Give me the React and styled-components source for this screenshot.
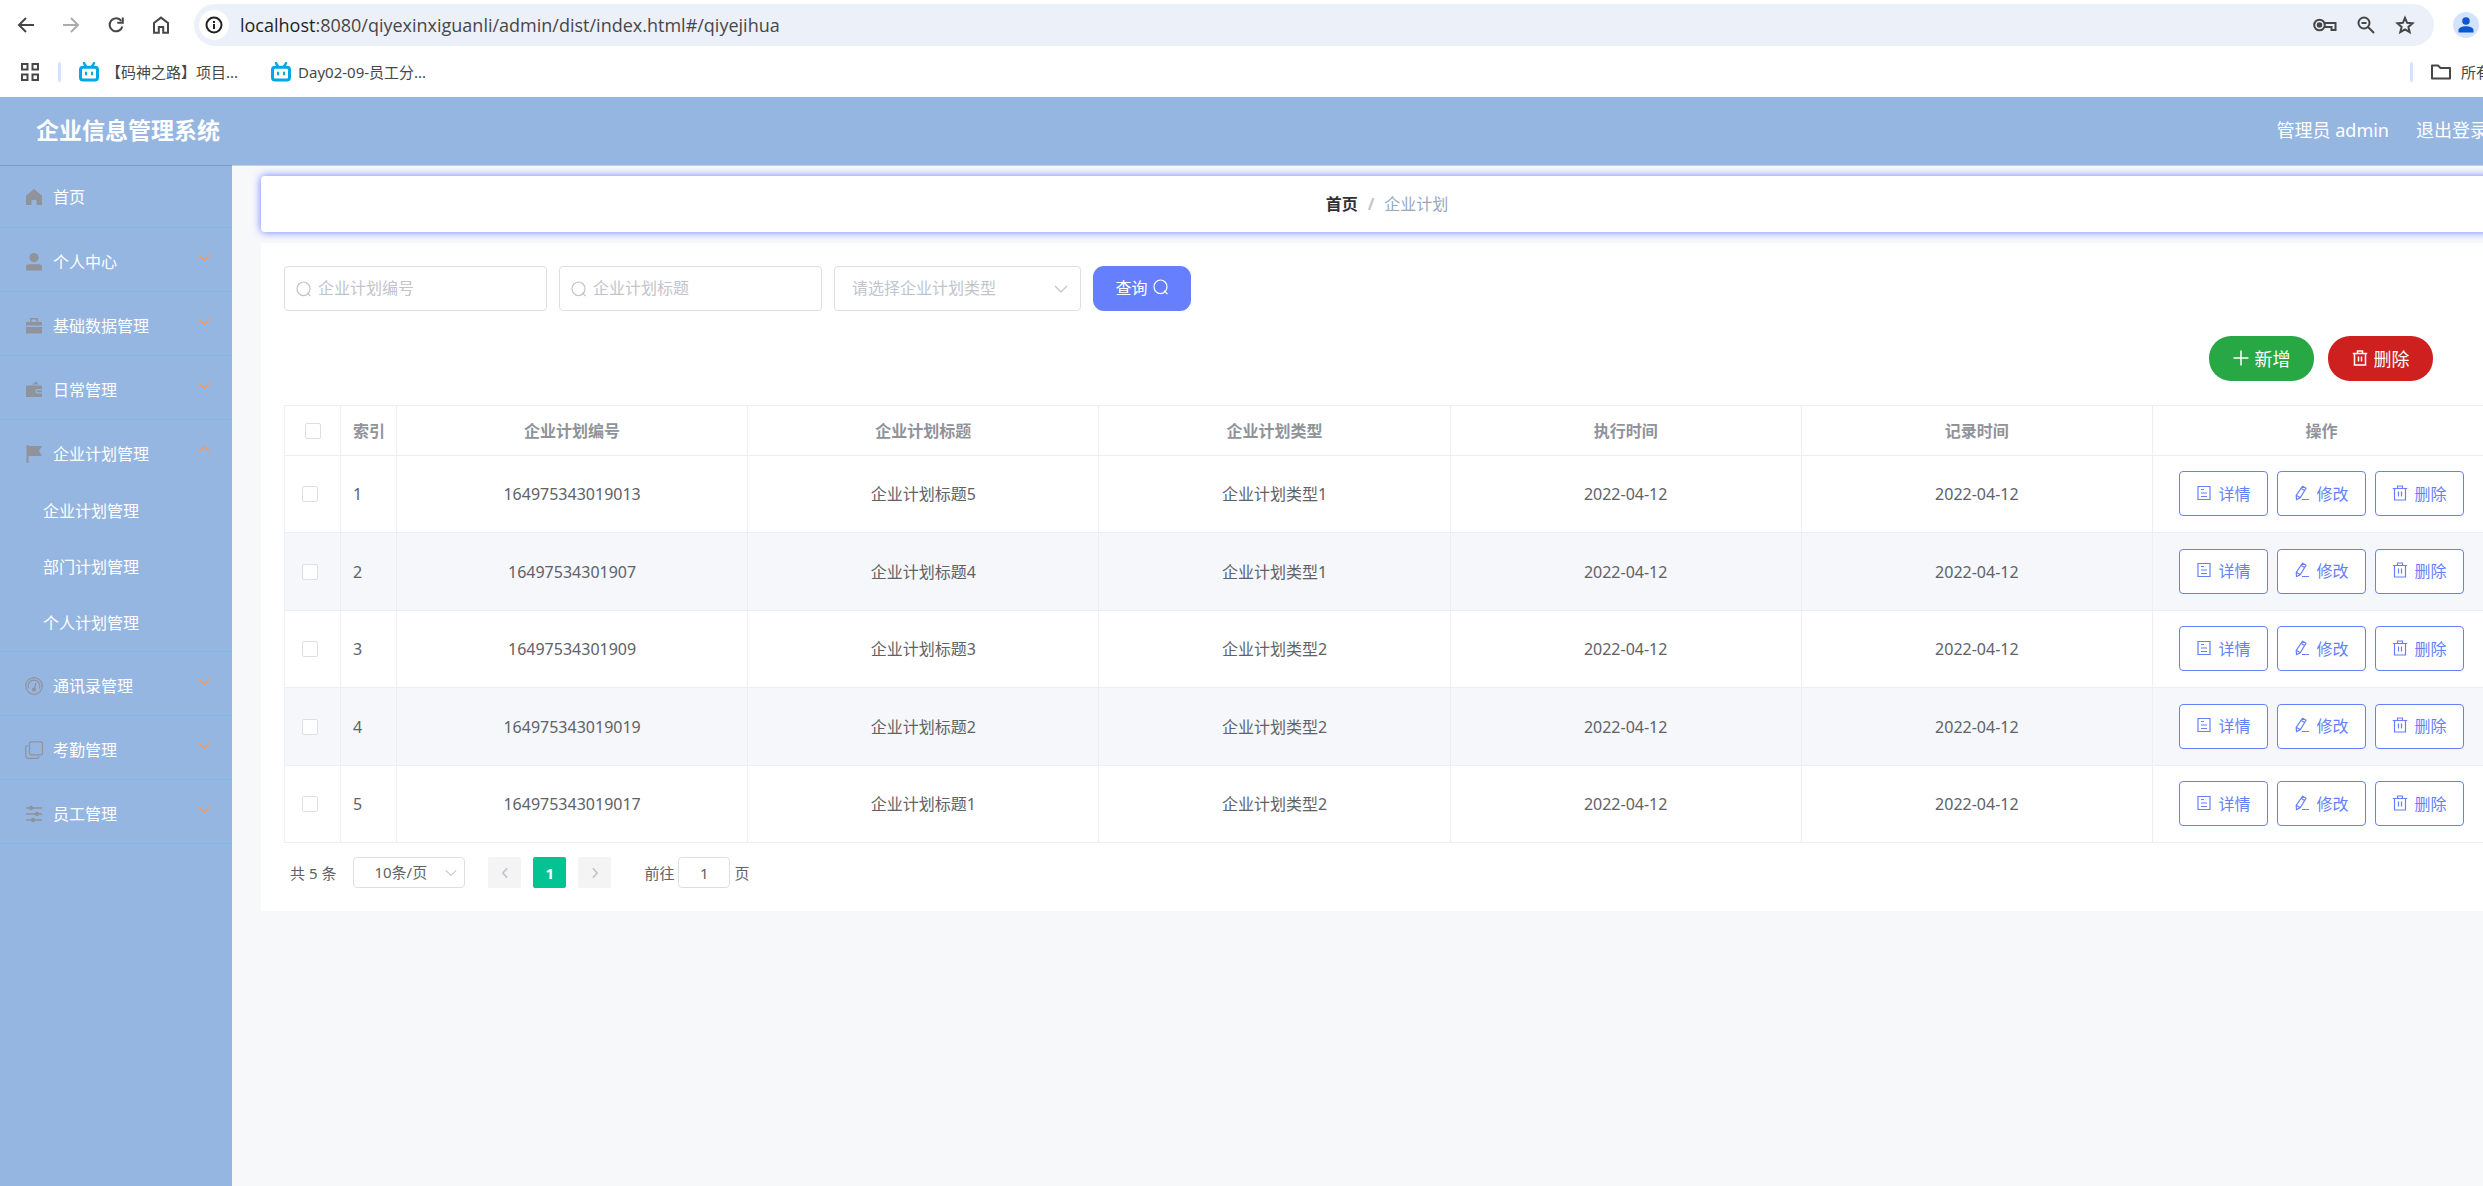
import React from "react";
import styled, { createGlobalStyle, css } from "styled-components";

const Global = createGlobalStyle`
  *, *::before, *::after { box-sizing: border-box; }
  body { margin: 0; background: #f7f8fa; overflow: hidden; }
  body, button, input, select {
    font-family: "Noto Sans", "Noto Sans CJK SC", sans-serif;
    font-size: 16px;
  }
  button { cursor: pointer; padding: 0; }
  a { text-decoration: none; color: inherit; }
`;

const Screen = styled.div`
  overflow: hidden;
  height: 100vh;
`;

/* The window is a little wider than the visible area. */
const Window = styled.div`
  display: flex;
  flex-direction: column;
  min-height: 100vh;
  margin-right: -58px;
`;

/* ---------- icons ---------- */

const Svg = styled.svg`
  display: block;
  flex: none;
  width: ${(p) => p.$w}px;
  height: ${(p) => p.$h || p.$w}px;
`;

const Stroke = ({ w = 16, h, box = "0 0 16 16", sw = 1, children }) => (
  <Svg $w={w} $h={h} viewBox={box} fill="none" stroke="currentColor" strokeWidth={sw} aria-hidden="true">
    {children}
  </Svg>
);
const Solid = ({ w = 18, h, box = "0 0 18 18", children }) => (
  <Svg $w={w} $h={h} viewBox={box} fill="currentColor" aria-hidden="true">
    {children}
  </Svg>
);

const BackIcon = () => (
  <Stroke w={18} box="0 0 18 18" sw={2}><path d="M17 9H2.5M9 2 2 9l7 7" /></Stroke>
);
const ForwardIcon = () => (
  <Stroke w={18} box="0 0 18 18" sw={2}><path d="M1 9h14.500M9 2l7 7-7 7" /></Stroke>
);
const ReloadIcon = () => (
  <Stroke w={18} box="0 0 18 18" sw={2}>
    <path d="M14.400 5A6.500 6.500 0 1 0 15.400 10.500" />
    <path d="M15.800 1.500V6.800H10.300" />
  </Stroke>
);
const HomeOutline = () => (
  <Stroke w={18} box="0 0 18 18" sw={2}>
    <path d="M2 16.800V7L9 1.600 16 7v9.800H11.200V11H6.800v5.800z" />
  </Stroke>
);
const InfoIcon = () => (
  <Stroke w={18} box="0 0 18 18" sw={2}>
    <circle cx="9" cy="9" r="7.500" /><path d="M9 8v5M9 5v2" />
  </Stroke>
);
const KeyIcon = () => (
  <Stroke w={24} h={14} box="0 0 24 14" sw={2}>
    <circle cx="6.500" cy="7" r="5.300" />
    <circle cx="6.500" cy="7" r="1.800" fill="currentColor" />
    <path d="M11.500 5H22.500V12H18.500V9H11.500" />
  </Stroke>
);
const ZoomOutIcon = () => (
  <Stroke w={18} box="0 0 18 18" sw={2}>
    <circle cx="7" cy="7" r="5.500" /><path d="M11 11l6 6M4.500 7h5" />
  </Stroke>
);
const StarIcon = () => (
  <Stroke w={20} box="0 0 20 20" sw={2}>
    <path d="M10 2.800l2.100 5 5.400.5-4.100 3.600 1.300 5.300L10 14.400l-4.700 2.800 1.300-5.300L2.500 8.300l5.400-.5z" />
  </Stroke>
);
const AppsIcon = () => (
  <Stroke w={20} box="0 0 20 20" sw={2}>
    <path d="M2 2h5.500v5.500H2zM12.500 2H18v5.500h-5.500zM2 12.500h5.500V18H2zM12.500 12.500H18V18h-5.500z" />
  </Stroke>
);
const FolderIcon = () => (
  <Stroke w={22} h={16} box="0 0 22 16" sw={2}>
    <path d="M2 1.500H8L10.500 4H20V14.500H2z" strokeLinejoin="round" />
  </Stroke>
);
const TvIcon = () => (
  <Svg $w={22} $h={20} viewBox="0 0 22 20" fill="none" stroke="#02a8e1" aria-hidden="true">
    <path d="M6 1.200l2 3.500M16 1.200l-2 3.500" strokeWidth="2.500" strokeLinecap="round" />
    <rect x="2.500" y="5.200" width="17" height="12.800" rx="2.500" strokeWidth="3" />
    <path d="M8 10.500v2M14 10.500v2" strokeWidth="2" strokeLinecap="round" />
  </Svg>
);
const PersonIcon = () => (
  <Solid w={16} box="0 0 16 16">
    <circle cx="8" cy="4" r="3.800" /><path d="M.5 15.500v-2.500c0-2.500 4-3.800 7.500-3.800s7.500 1.300 7.500 3.800v2.500z" />
  </Solid>
);

const SearchIcon = () => (
  <Stroke sw={1.2}><ellipse cx="7.500" cy="7.800" rx="6.500" ry="6.800" /><path d="M11 11.800l3.500 3.300" /></Stroke>
);
const Chevron = ({ w = 14, up, left, right, sw = 1.2 }) => (
  <Stroke w={w} box="0 0 14 14" sw={sw}>
    <path d={up ? "M1 10 7 4l6 6" : left ? "M9.500 1.500 4.500 7l5 5.500" : right ? "M4.500 1.500l5 5.500-5 5.500" : "M1 4l6 6 6-6"} />
  </Stroke>
);
const PlusIcon = () => <Stroke sw={1.5}><path d="M8 .5v15M.5 8h15" /></Stroke>;
const TrashIcon = ({ sw = 1.2 }) => (
  <Stroke sw={sw}>
    <path d="M.8 3.500h14.400M2.500 3.500V15h11V3.500M5.500 3.200V1h5v2.200M6.500 6.500v5M9.500 6.500v5" />
  </Stroke>
);
const DocIcon = () => (
  <Stroke sw={1.2}><path d="M2 1.500h12v13H2zM5 4.500h3M5 8h6M5 11.500h6" /></Stroke>
);
const EditIcon = () => (
  <Stroke sw={1.2}>
    <path d="M8.500 1.200l3.500 2-5.800 9.600-3.700 1.700-.3-4zM7.300 3.500l3.300 2M8 14.500h7M2.500 10.500l3.500 2" />
  </Stroke>
);

const menuIcons = {
  home: <path d="M1 7.800 9 1l8 6.800V17h-5.500v-5h-5v5H1z" />,
  user: <path d="M9 0a4.600 4.600 0 1 1 0 9.200A4.600 4.600 0 0 1 9 0zM1 17.500V14q0-2.800 2.800-2.800h10.400Q17 11.200 17 14v3.500z" />,
  bag: <path d="M1 5h4V1h8v4h4v3.500H1zM6.500 2.500V5h5V2.500zM1 10h16v6.500H1z" fillRule="evenodd" />,
  wallet: <path d="M7 3.500 11.500.5 13.500 3.500zM1 4.500h16V8h-4.500a2.300 2.300 0 0 0 0 4.600H17V16H1zM12.500 9.300H17v2h-4.500a1 1 0 0 1 0-2z" />,
  flag: <path d="M1.500 0h2v1H17l-3 5 3 5H3.500v7h-2z" />,
  gauge: (
    <g fill="none" stroke="currentColor" strokeWidth="1.200">
      <circle cx="9" cy="9" r="8.300" />
      <path d="M3.800 11.500A5.800 5.800 0 1 1 14.200 11.500M9.300 12l1.500-6" />
      <circle cx="9" cy="12.500" r="1.500" fill="currentColor" />
    </g>
  ),
  copy: (
    <g fill="none" stroke="currentColor" strokeWidth="1.200">
      <rect x="4.500" y=".8" width="13" height="13" rx="1.500" />
      <path d="M3 4.500Q.8 4.500.8 6.500v9Q.8 17.300 2.500 17.300H12q2 0 2-1.800" />
    </g>
  ),
  sliders: (
    <g stroke="currentColor" strokeWidth="1.300">
      <path d="M1 3h16M1 9h16M1 15h16" />
      <circle cx="6" cy="3" r="1.500" /><circle cx="12" cy="9" r="1.500" /><circle cx="8" cy="15" r="1.500" />
    </g>
  ),
};

/* ---------- browser bars ---------- */

const Toolbar = styled.div`
  display: flex;
  align-items: center;
  gap: 27px;
  height: 50px;
  padding: 0 62px 0 17px;
  background: #fff;
  color: #474747;
`;
const BarButton = styled.button`
  display: flex;
  border: 0;
  background: none;
  color: ${(p) => (p.$faint ? "#ababab" : "#474747")};
`;
const AddressBar = styled.div`
  display: flex;
  flex: 1;
  align-items: center;
  gap: 20px;
  height: 42px;
  margin: 0 -8px 0 -3px;
  padding: 0 19px 0 5px;
  border-radius: 21px;
  background: #ecf0f9;
`;
const SiteInfo = styled.button`
  display: flex;
  align-items: center;
  justify-content: center;
  width: 30px;
  height: 30px;
  margin-right: -9px;
  border: 0;
  border-radius: 50%;
  background: #fff;
  color: #222;
`;
const Url = styled.div`
  flex: 1;
  font-family: "Open Sans", "Noto Sans", sans-serif;
  font-size: 18px;
  line-height: 24px;
  color: #474747;
  b { font-weight: 400; color: #1f1f1f; }
`;
const Avatar = styled.button`
  display: flex;
  align-items: center;
  justify-content: center;
  width: 26px;
  height: 26px;
  border: 0;
  border-radius: 50%;
  background: #d3e3fd;
  color: #0b57d0;
`;
const Bookmarks = styled.div`
  display: flex;
  align-items: center;
  height: 47px;
  padding: 0 20px 4px 20px;
  background: #fff;
  color: #474747;
  font-size: 15px;
`;
const Divider = styled.i`
  width: 3px;
  height: 20px;
  margin: 0 17px 0 ${(p) => p.$before || 0}px;
  border-radius: 2px;
  background: #d3e3fd;
`;
const Bookmark = styled.a`
  display: flex;
  align-items: center;
  gap: 6px;
  margin-right: 32px;
  white-space: nowrap;
`;
const AllBookmarks = styled.button`
  display: flex;
  align-items: center;
  gap: 9px;
  border: 0;
  background: none;
  color: #474747;
  font-size: 15px;
  white-space: nowrap;
`;
const Spacer = styled.div`
  flex: 1;
`;

/* ---------- application frame ---------- */

const Header = styled.header`
  display: flex;
  align-items: center;
  justify-content: space-between;
  height: 68px;
  padding: 0 53px 2px 36px;
  background: #95b6e1;
  color: #fff;
`;
const Title = styled.h1`
  margin: 0;
  font-size: 23px;
  font-weight: 700;
  line-height: 34px;
`;
const Account = styled.div`
  display: flex;
  gap: 27px;
  font-size: 18px;
  line-height: 26px;
`;
const Body = styled.div`
  display: flex;
  flex: 1;
`;
const Sidebar = styled.nav`
  flex: none;
  width: 232px;
  border-top: 1px solid #7f9dcb;
  background: #95b6e1;
  color: #fff;
`;
const MenuGroup = styled.div`
  border-bottom: 1px solid #f29a50;
`;
const MenuTitle = styled.a`
  display: flex;
  align-items: center;
  gap: 10px;
  height: ${(p) => (p.$plain ? 61 : 63)}px;
  padding: ${(p) => (p.$plain ? 0 : 5)}px 21px 0 25px;
  line-height: 24px;
  color: #fff;
  > svg:first-child { color: #909399; }
`;
const Arrow = styled.span`
  margin: 0 0 9px auto;
  color: #f59a58;
`;
const SubItem = styled.a`
  display: block;
  padding-left: 43px;
  line-height: 56px;
  color: #fff;
`;
const Main = styled.main`
  flex: 1;
  min-width: 0;
  padding: 10px 28px 0 29px;
  border-top: 1px solid #c9cdd5;
  background: #f7f8fa;
`;
const Breadcrumb = styled.nav`
  display: flex;
  align-items: center;
  justify-content: center;
  gap: 10px;
  height: 56px;
  margin-bottom: 11px;
  border-radius: 4px;
  background: #fff;
  box-shadow: 0 0 9px #657dff;
  color: #97a8be;
  line-height: 24px;
  a { color: #303133; font-weight: 700; }
  i { color: #c0c4cc; font-weight: 700; font-style: normal; }
`;
const Card = styled.section`
  padding: 23px 22px 23px 23px;
  background: #fff;
`;

/* ---------- search form ---------- */

const SearchForm = styled.form`
  display: flex;
  gap: 12px;
`;
const box = css`
  border: 1px solid #dcdfe6;
  border-radius: 4px;
  background: #fff;
`;
const Field = styled.label`
  ${box}
  display: flex;
  align-items: center;
  gap: 6px;
  width: 263px;
  height: 45px;
  padding: 0 11px;
  color: #c0c4cc;
  input {
    flex: 1;
    min-width: 0;
    padding: 0 0 2px;
    border: 0;
    outline: 0;
    background: none;
    color: #606266;
  }
  input::placeholder { color: #c0c4cc; opacity: 1; }
`;
const SelectBox = styled.label`
  ${box}
  display: flex;
  align-items: center;
  width: ${(p) => p.$w}px;
  height: ${(p) => p.$h}px;
  padding: 0 ${(p) => p.$end}px 0 ${(p) => p.$start}px;
  color: #c0c4cc;
  select {
    flex: 1;
    min-width: 0;
    padding: 0 0 2px;
    border: 0;
    outline: 0;
    appearance: none;
    background: none;
    color: ${(p) => p.$ink};
    font-size: ${(p) => p.$font}px;
  }
`;
const QueryButton = styled.button`
  display: flex;
  align-items: center;
  justify-content: center;
  gap: 5px;
  width: 98px;
  height: 45px;
  padding-bottom: 4px;
  border: 0;
  border-radius: 11px;
  background: #667fff;
  color: #fff;
`;
const Actions = styled.div`
  display: flex;
  justify-content: flex-end;
  gap: 14px;
  padding: 25px 58px 24px 0;
`;
const PillButton = styled.button`
  display: flex;
  align-items: center;
  justify-content: center;
  gap: 6px;
  width: 105px;
  height: 45px;
  padding-bottom: 2px;
  border: 0;
  border-radius: 22px;
  background: ${(p) => p.$bg};
  color: #fff;
  font-size: 18px;
`;

/* ---------- table ---------- */

const Table = styled.table`
  width: 100%;
  table-layout: fixed;
  border-collapse: collapse;
  color: #606266;
  line-height: 24px;
  th, td { padding: 0; border: 1px solid #ebeef5; text-align: center; }
  th { height: 50px; color: #909399; font-weight: 700; }
  tbody tr { height: 77px; }
  tbody tr:nth-child(even) { height: 78px; background: #f5f7fb; }
  th:nth-child(2), td:nth-child(2) { padding-left: 12px; text-align: left; }
  td:first-child { padding-right: 5px; }
  td:last-child { padding-bottom: 1px; }
`;
const Col = styled.col`
  width: ${(p) => p.$w}px;
`;
const Check = styled.input.attrs({ type: "checkbox" })`
  display: block;
  width: 16px;
  height: 16px;
  margin: 0 auto;
  appearance: none;
  border: 1px solid #dcdfe6;
  border-radius: 2px;
  background: #fff;
`;
const RowActions = styled.div`
  display: flex;
  justify-content: center;
  gap: 9px;
`;
const RowButton = styled.button`
  display: flex;
  align-items: center;
  justify-content: center;
  gap: 6px;
  width: 89px;
  height: 45px;
  padding-bottom: 2px;
  border: 1px solid #667fff;
  border-radius: 4px;
  background: #fff;
  color: #667fff;
`;

/* ---------- pagination ---------- */

const Pager = styled.div`
  display: flex;
  align-items: center;
  padding: 14px 6px 0;
  color: #606266;
  font-size: 15px;
  line-height: 24px;
`;
const PageButtons = styled.div`
  display: flex;
  gap: 12px;
  margin: 0 33px 0 23px;
`;
const PageButton = styled.button`
  display: flex;
  align-items: center;
  justify-content: center;
  width: 33px;
  height: 31px;
  border: 0;
  border-radius: 2px;
  background: ${(p) => (p.$active ? "#04c393" : "#f4f4f5")};
  color: ${(p) => (p.$active ? "#fff" : "#c0c4cc")};
  font-size: 15px;
  font-weight: 700;
`;
const Total = styled.span`
  margin-right: 17px;
`;
const Jump = styled.label`
  display: flex;
  align-items: center;
  gap: 4px;
  input {
    ${box}
    width: 52px;
    height: 31px;
    padding: 0;
    color: #606266;
    font-size: 15px;
    text-align: center;
  }
`;

const before = [
  ["user", "个人中心"],
  ["bag", "基础数据管理"],
  ["wallet", "日常管理"],
];
const after = [
  ["gauge", "通讯录管理"],
  ["copy", "考勤管理"],
  ["sliders", "员工管理"],
];
const rows = [
  ["164975343019013", "企业计划标题5", "企业计划类型1"],
  ["16497534301907", "企业计划标题4", "企业计划类型1"],
  ["16497534301909", "企业计划标题3", "企业计划类型2"],
  ["164975343019019", "企业计划标题2", "企业计划类型2"],
  ["164975343019017", "企业计划标题1", "企业计划类型2"],
];
const heads = ["企业计划编号", "企业计划标题", "企业计划类型", "执行时间", "记录时间", "操作"];

function Menu({ icon, label, items }) {
  return (
    <MenuGroup>
      <MenuTitle href="#">
        <Solid>{menuIcons[icon]}</Solid>
        {label}
        <Arrow><Chevron w={13} up={!!items} sw={1.5} /></Arrow>
      </MenuTitle>
      {items && items.map((t) => <SubItem href="#" key={t}>{t}</SubItem>)}
    </MenuGroup>
  );
}

export default function App() {
  return (
    <Screen>
      <Global />
      <Window>
        <Toolbar>
          <BarButton aria-label="back"><BackIcon /></BarButton>
          <BarButton aria-label="forward" $faint><ForwardIcon /></BarButton>
          <BarButton aria-label="reload"><ReloadIcon /></BarButton>
          <BarButton aria-label="home"><HomeOutline /></BarButton>
          <AddressBar>
            <SiteInfo aria-label="site information"><InfoIcon /></SiteInfo>
            <Url><b>localhost</b>:8080/qiyexinxiguanli/admin/dist/index.html#/qiyejihua</Url>
            <BarButton aria-label="passwords"><KeyIcon /></BarButton>
            <BarButton aria-label="zoom"><ZoomOutIcon /></BarButton>
            <BarButton aria-label="bookmark"><StarIcon /></BarButton>
          </AddressBar>
          <Avatar aria-label="profile"><PersonIcon /></Avatar>
        </Toolbar>
        <Bookmarks>
          <BarButton aria-label="apps"><AppsIcon /></BarButton>
          <Divider $before={18} />
          <Bookmark href="#"><TvIcon />【码神之路】项目...</Bookmark>
          <Bookmark href="#"><TvIcon />Day02-09-员工分...</Bookmark>
          <Spacer />
          <Divider />
          <AllBookmarks><FolderIcon />所有书签</AllBookmarks>
        </Bookmarks>

        <Header>
          <Title>企业信息管理系统</Title>
          <Account>
            <span>管理员 admin</span>
            <a href="#">退出登录</a>
          </Account>
        </Header>

        <Body>
          <Sidebar>
            <MenuGroup>
              <MenuTitle href="#" $plain><Solid>{menuIcons.home}</Solid>首页</MenuTitle>
            </MenuGroup>
            {before.map(([i, t]) => <Menu key={t} icon={i} label={t} />)}
            <Menu icon="flag" label="企业计划管理" items={["企业计划管理", "部门计划管理", "个人计划管理"]} />
            {after.map(([i, t]) => <Menu key={t} icon={i} label={t} />)}
          </Sidebar>

          <Main>
            <Breadcrumb>
              <a href="#">首页</a><i>/</i><span>企业计划</span>
            </Breadcrumb>
            <Card>
              <SearchForm onSubmit={(e) => e.preventDefault()}>
                <Field><SearchIcon /><input aria-label="企业计划编号" placeholder="企业计划编号" /></Field>
                <Field><SearchIcon /><input aria-label="企业计划标题" placeholder="企业计划标题" /></Field>
                <SelectBox $w={247} $h={45} $start={17} $end={12} $ink="#c0c4cc" $font={16}>
                  <select aria-label="企业计划类型"><option>请选择企业计划类型</option></select>
                  <Chevron />
                </SelectBox>
                <QueryButton>查询<SearchIcon /></QueryButton>
              </SearchForm>

              <Actions>
                <PillButton $bg="#28a745"><PlusIcon />新增</PillButton>
                <PillButton $bg="#cd201f"><TrashIcon sw={1.5} />删除</PillButton>
              </Actions>

              <Table>
                <colgroup>
                  <Col $w={56} /><Col $w={56} /><col /><col /><col /><col /><col /><Col $w={338} />
                </colgroup>
                <thead>
                  <tr>
                    <th><Check aria-label="全选" /></th>
                    <th>索引</th>
                    {heads.map((h) => <th key={h}>{h}</th>)}
                  </tr>
                </thead>
                <tbody>
                  {rows.map(([id, title, type], i) => (
                    <tr key={id}>
                      <td><Check aria-label={title} /></td>
                      <td>{i + 1}</td>
                      <td>{id}</td>
                      <td>{title}</td>
                      <td>{type}</td>
                      <td>2022-04-12</td>
                      <td>2022-04-12</td>
                      <td>
                        <RowActions>
                          <RowButton><DocIcon />详情</RowButton>
                          <RowButton><EditIcon />修改</RowButton>
                          <RowButton><TrashIcon />删除</RowButton>
                        </RowActions>
                      </td>
                    </tr>
                  ))}
                </tbody>
              </Table>

              <Pager>
                <Total>共 5 条</Total>
                <SelectBox $w={112} $h={31} $start={20} $end={7} $ink="#606266" $font={15}>
                  <select aria-label="每页条数"><option>10条/页</option></select>
                  <Chevron w={12} />
                </SelectBox>
                <PageButtons>
                  <PageButton aria-label="上一页"><Chevron w={12} left sw={2} /></PageButton>
                  <PageButton $active>1</PageButton>
                  <PageButton aria-label="下一页"><Chevron w={12} right sw={2} /></PageButton>
                </PageButtons>
                <Jump>前往<input defaultValue="1" />页</Jump>
              </Pager>
            </Card>
          </Main>
        </Body>
      </Window>
    </Screen>
  );
}
